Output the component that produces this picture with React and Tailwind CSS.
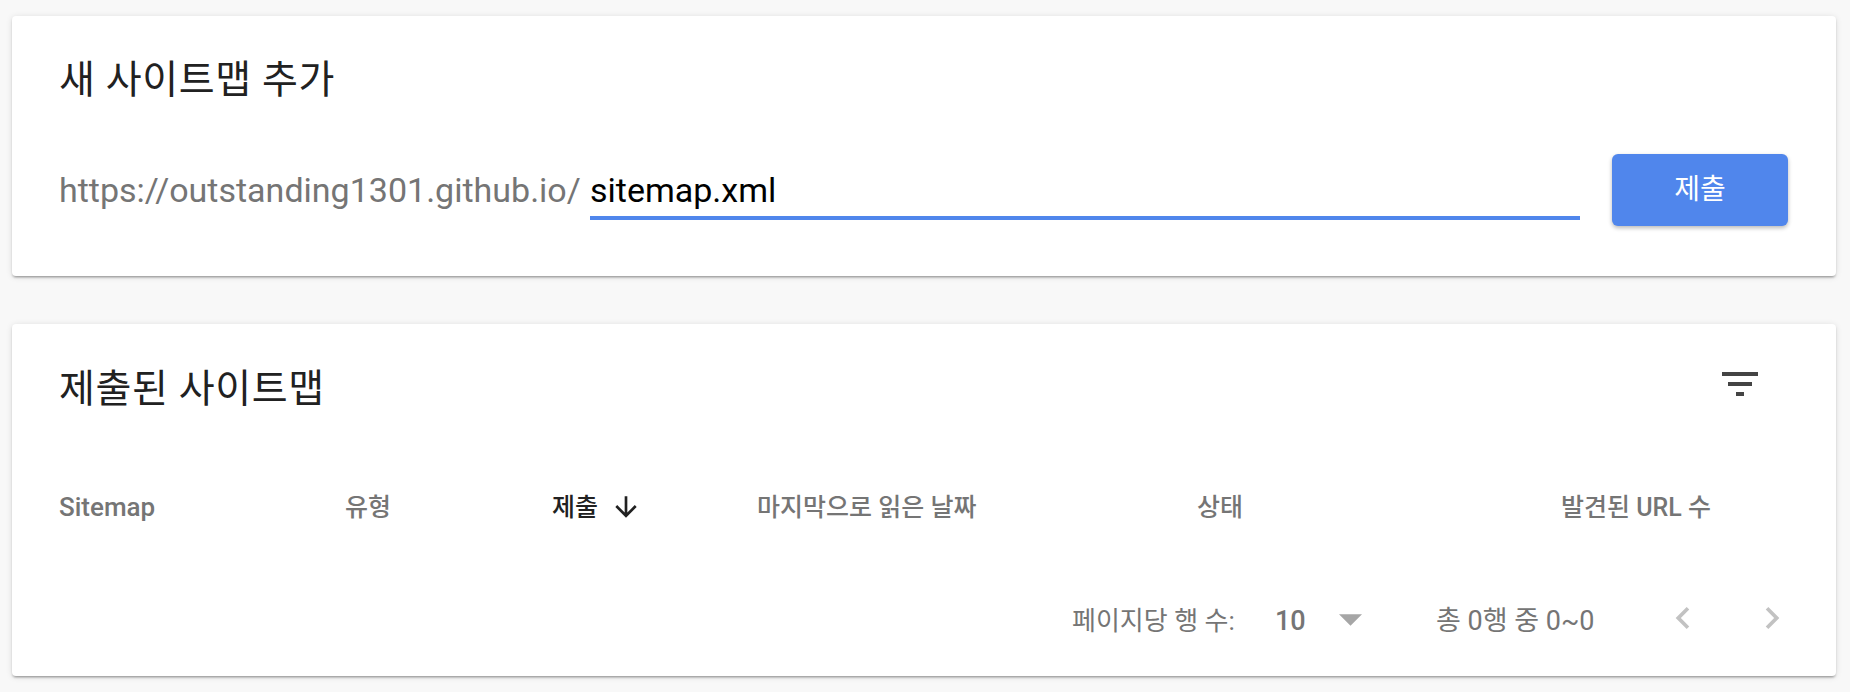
export default function App() {
  return (
    <div className="min-h-[692px] w-full bg-[#f8f8f8] pt-[16px] pl-[12px] pr-[14px] font-[Roboto,'Noto_Sans_CJK_KR',sans-serif]">
      {/* Card 1 */}
      <div className="h-[260px] rounded-[4px] bg-white pl-[47px] pr-[48px] pt-[45px] shadow-[0_2px_2px_rgba(0,0,0,0.14),0_3px_2px_-2px_rgba(0,0,0,0.2),0_1px_6px_rgba(0,0,0,0.12)]">
        <h2 className="text-[39px] leading-none font-normal tracking-[0.6px] text-[#212121] whitespace-nowrap">새 사이트맵 추가</h2>
        <div className="mt-[54px] flex items-start">
          <span className="mt-[19px] w-[531px] flex-none whitespace-nowrap text-[34px] leading-none text-[#757575]">
            https://outstanding1301.github.io/
          </span>
          <div className="mt-[19px] w-[990px] flex-none border-b-4 border-[#5086ec] pb-[9px] text-[34px] leading-none text-black">
            sitemap.xml
          </div>
          <button className="ml-[32px] flex h-[72px] w-[176px] flex-none items-center justify-center rounded-[6px] bg-[#5086ec] text-[28px] leading-none text-white shadow-[0_2px_4px_rgba(0,0,0,0.28)]">
            제출
          </button>
        </div>
      </div>

      {/* Card 2 */}
      <div className="mt-[48px] h-[352px] rounded-[4px] bg-white pl-[47px] pr-[42px] pt-[36px] shadow-[0_2px_2px_rgba(0,0,0,0.14),0_3px_2px_-2px_rgba(0,0,0,0.2),0_1px_6px_rgba(0,0,0,0.12)]">
        <div className="flex items-start justify-between">
          <h2 className="mt-[10px] text-[39px] leading-none font-normal tracking-[0.6px] text-[#212121] whitespace-nowrap">제출된 사이트맵</h2>
          <svg className="mr-[30px]" width="48" height="48" viewBox="0 0 24 24">
            <path d="M10 18h4v-2h-4v2zM3 6v2h18V6H3zm3 7h12v-2H6v2z" fill="#444444" />
          </svg>
        </div>

        <div className="mt-[85px] flex h-[26px] items-center text-[25px] leading-none font-medium text-[#757575] whitespace-nowrap">
          <div className="w-[286px] flex-none text-[26px]">Sitemap</div>
          <div className="w-[207px] flex-none">유형</div>
          <div className="flex w-[205px] flex-none items-center text-[#212121]">
            <span>제출</span>
            <svg className="ml-[12px]" width="32" height="32" viewBox="0 0 24 24">
              <path d="M20 12l-1.41-1.41L13 16.17V4h-2v12.17l-5.58-5.59L4 12l8 8 8-8z" fill="#212121" />
            </svg>
          </div>
          <div className="w-[440px] flex-none">마지막으로 읽은 날짜</div>
          <div className="w-[300px] flex-none">상태</div>
          <div className="flex-1 pr-[83px] text-right">발견된 URL 수</div>
        </div>

        <div className="mt-[76px] flex h-[44px] items-center justify-end text-[26px] leading-none text-[#757575] whitespace-nowrap">
          <div className="mt-[6px] w-[203px] flex-none">페이지당 행 수:</div>
          <div className="mt-[6px] w-[64px] flex-none text-[27px] font-medium">10</div>
          <div className="mt-[4px] w-[97px] flex-none">
            <svg width="23" height="12" viewBox="0 0 24 12">
              <path d="M0 0h24L12 12z" fill="#a6a6a6" />
            </svg>
          </div>
          <div className="mt-[6px] w-[225px] flex-none text-[27px]">총 0행 중 0~0</div>
          <svg width="44" height="44" viewBox="0 0 24 24" className="flex-none">
            <path d="M15.41 7.41L14 6l-6 6 6 6 1.41-1.41L10.83 12z" fill="#c2c2c2" />
          </svg>
          <svg width="44" height="44" viewBox="0 0 24 24" className="ml-[45px] flex-none">
            <path d="M10 6L8.59 7.41 13.17 12l-4.58 4.59L10 18l6-6z" fill="#c2c2c2" />
          </svg>
        </div>
      </div>
    </div>
  );
}
